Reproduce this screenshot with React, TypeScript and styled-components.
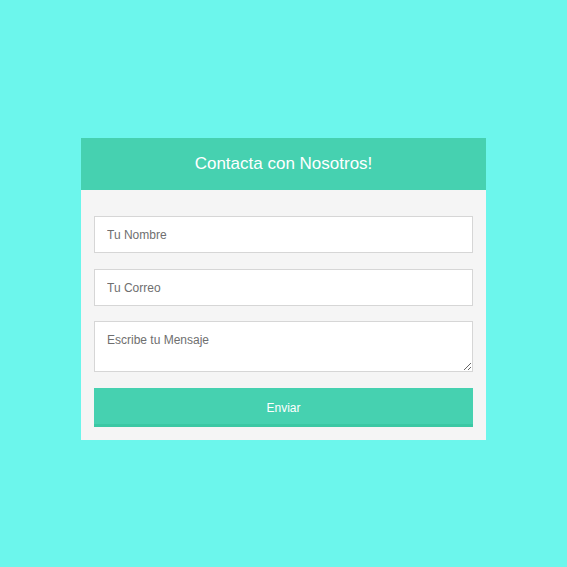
import React from "react";
import styled, { createGlobalStyle } from "styled-components";

const Global = createGlobalStyle`
  html, body { margin: 0; padding: 0; }
  body {
    background: #6cf6ec;
    min-height: 567px;
    font-family: "Liberation Sans", Arial, sans-serif;
  }
`;

const Page = styled.div`
  padding-top: 138px;
  display: flex;
  justify-content: center;
`;

const Card = styled.div`
  width: 405px;
  background: #f5f5f5;
`;

const Header = styled.h1`
  margin: 0;
  height: 52px;
  background: #46d1b0;
  color: #ffffff;
  font-family: "Liberation Sans", Arial, sans-serif;
  font-weight: normal;
  font-size: 17px;
  display: flex;
  align-items: center;
  justify-content: center;
`;

const Form = styled.form`
  display: flex;
  flex-direction: column;
  gap: 16px;
  padding: 26px 13px 13px;
`;

const Field = styled.input`
  box-sizing: border-box;
  width: 100%;
  height: 37px;
  border: 1px solid #d6d6d6;
  background: #ffffff;
  padding: 0 12px;
  font-family: "Liberation Sans", Arial, sans-serif;
  font-size: 12px;
  color: #555;
  outline: none;
  &::placeholder { color: #6f6f6f; }
`;

const Message = styled.textarea`
  box-sizing: border-box;
  width: 100%;
  height: 51px;
  margin-top: -1px;
  border: 1px solid #d6d6d6;
  background: #ffffff;
  padding: 11px 12px;
  font-family: "Liberation Sans", Arial, sans-serif;
  font-size: 12px;
  color: #555;
  outline: none;
  display: block;
  &::placeholder { color: #6f6f6f; }
`;

const Submit = styled.button`
  box-sizing: border-box;
  width: 100%;
  height: 39px;
  border: none;
  border-bottom: 3px solid #3bc8a4;
  background: #46d1b0;
  color: #ffffff;
  font-family: "Liberation Sans", Arial, sans-serif;
  font-size: 12px;
  padding: 3px 0 0;
  cursor: pointer;
`;

export default function App() {
  return (
    <>
      <Global />
      <Page>
        <Card>
          <Header>Contacta con Nosotros!</Header>
          <Form onSubmit={(e) => e.preventDefault()}>
            <Field type="text" placeholder="Tu Nombre" />
            <Field type="email" placeholder="Tu Correo" />
            <Message placeholder="Escribe tu Mensaje" />
            <Submit type="submit">Enviar</Submit>
          </Form>
        </Card>
      </Page>
    </>
  );
}
